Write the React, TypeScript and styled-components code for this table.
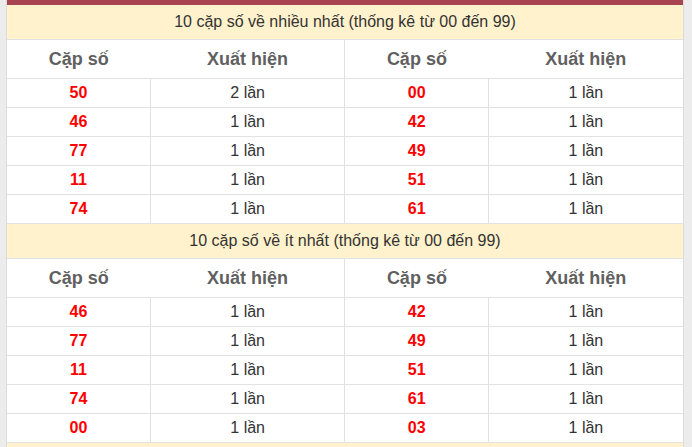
import styled, { createGlobalStyle } from "styled-components";

type Pair = { num: string; count: number };

const MOST: Pair[][] = [
  [{ num: "50", count: 2 }, { num: "00", count: 1 }],
  [{ num: "46", count: 1 }, { num: "42", count: 1 }],
  [{ num: "77", count: 1 }, { num: "49", count: 1 }],
  [{ num: "11", count: 1 }, { num: "51", count: 1 }],
  [{ num: "74", count: 1 }, { num: "61", count: 1 }],
];

const LEAST: Pair[][] = [
  [{ num: "46", count: 1 }, { num: "42", count: 1 }],
  [{ num: "77", count: 1 }, { num: "49", count: 1 }],
  [{ num: "11", count: 1 }, { num: "51", count: 1 }],
  [{ num: "74", count: 1 }, { num: "61", count: 1 }],
  [{ num: "00", count: 1 }, { num: "03", count: 1 }],
];

const GlobalStyle = createGlobalStyle`
  body {
    margin: 0;
    background: #ececec;
    font-family: "Liberation Sans", Arial, sans-serif;
  }
`;

function Section({ title, rows }: { title: string; rows: Pair[][] }) {
  return (
    <tbody>
      <tr>
        <Title colSpan={4}>{title}</Title>
      </tr>
      <tr>
        <Head>Cặp số</Head>
        <Head>Xuất hiện</Head>
        <Head $split>Cặp số</Head>
        <Head>Xuất hiện</Head>
      </tr>
      {rows.map((row, i) => (
        <tr key={i}>
          {row.map((p, j) => [
            <Num key={"n" + j} $split={j === 1}>
              {p.num}
            </Num>,
            <Cell key={"c" + j}>{p.count} lần</Cell>,
          ])}
        </tr>
      ))}
    </tbody>
  );
}

export default function App() {
  return (
    <>
      <GlobalStyle />
      <Page>
        <Card>
          <TopBar />
          <Table>
            <colgroup>
              <col style={{ width: "21.2%" }} />
              <col style={{ width: "28.8%" }} />
              <col style={{ width: "21.2%" }} />
              <col style={{ width: "28.8%" }} />
            </colgroup>
            <Section
              title="10 cặp số về nhiều nhất (thống kê từ 00 đến 99)"
              rows={MOST}
            />
            <Section
              title="10 cặp số về ít nhất (thống kê từ 00 đến 99)"
              rows={LEAST}
            />
            <tbody>
              <tr>
                <Title colSpan={4}>&nbsp;</Title>
              </tr>
            </tbody>
          </Table>
        </Card>
      </Page>
    </>
  );
}

const Page = styled.div`
  padding: 0 8px 0 6px;
  height: 447px;
  overflow: hidden;
`;

const Card = styled.div`
  background: #fff;
  border-left: 1px solid #dcdcdc;
  border-right: 1px solid #dcdcdc;
`;

const TopBar = styled.div`
  height: 5px;
  background: #a84452;
`;

const Table = styled.table`
  width: 100%;
  border-collapse: collapse;
  table-layout: fixed;
`;

const Title = styled.td`
  height: 34px;
  padding: 0;
  background: #fff2cc;
  border-bottom: 1px solid #e2e2e2;
  text-align: center;
  font-size: 16px;
  color: #333;
`;

const Head = styled.th<{ $split?: boolean }>`
  height: 38px;
  padding: 0;
  font-size: 18px;
  font-weight: bold;
  color: #606060;
  text-align: center;
  border-bottom: 1px solid #e2e2e2;
  border-left: ${(p) => (p.$split ? "1px solid #e2e2e2" : "none")};
`;

const Cell = styled.td`
  height: 28px;
  padding: 0;
  font-size: 16px;
  color: #333;
  text-align: center;
  border-bottom: 1px solid #e2e2e2;
  border-left: 1px solid #e2e2e2;
`;

const Num = styled(Cell)<{ $split?: boolean }>`
  color: #f00;
  font-weight: bold;
  border-left: ${(p) => (p.$split ? "1px solid #e2e2e2" : "none")};
`;
